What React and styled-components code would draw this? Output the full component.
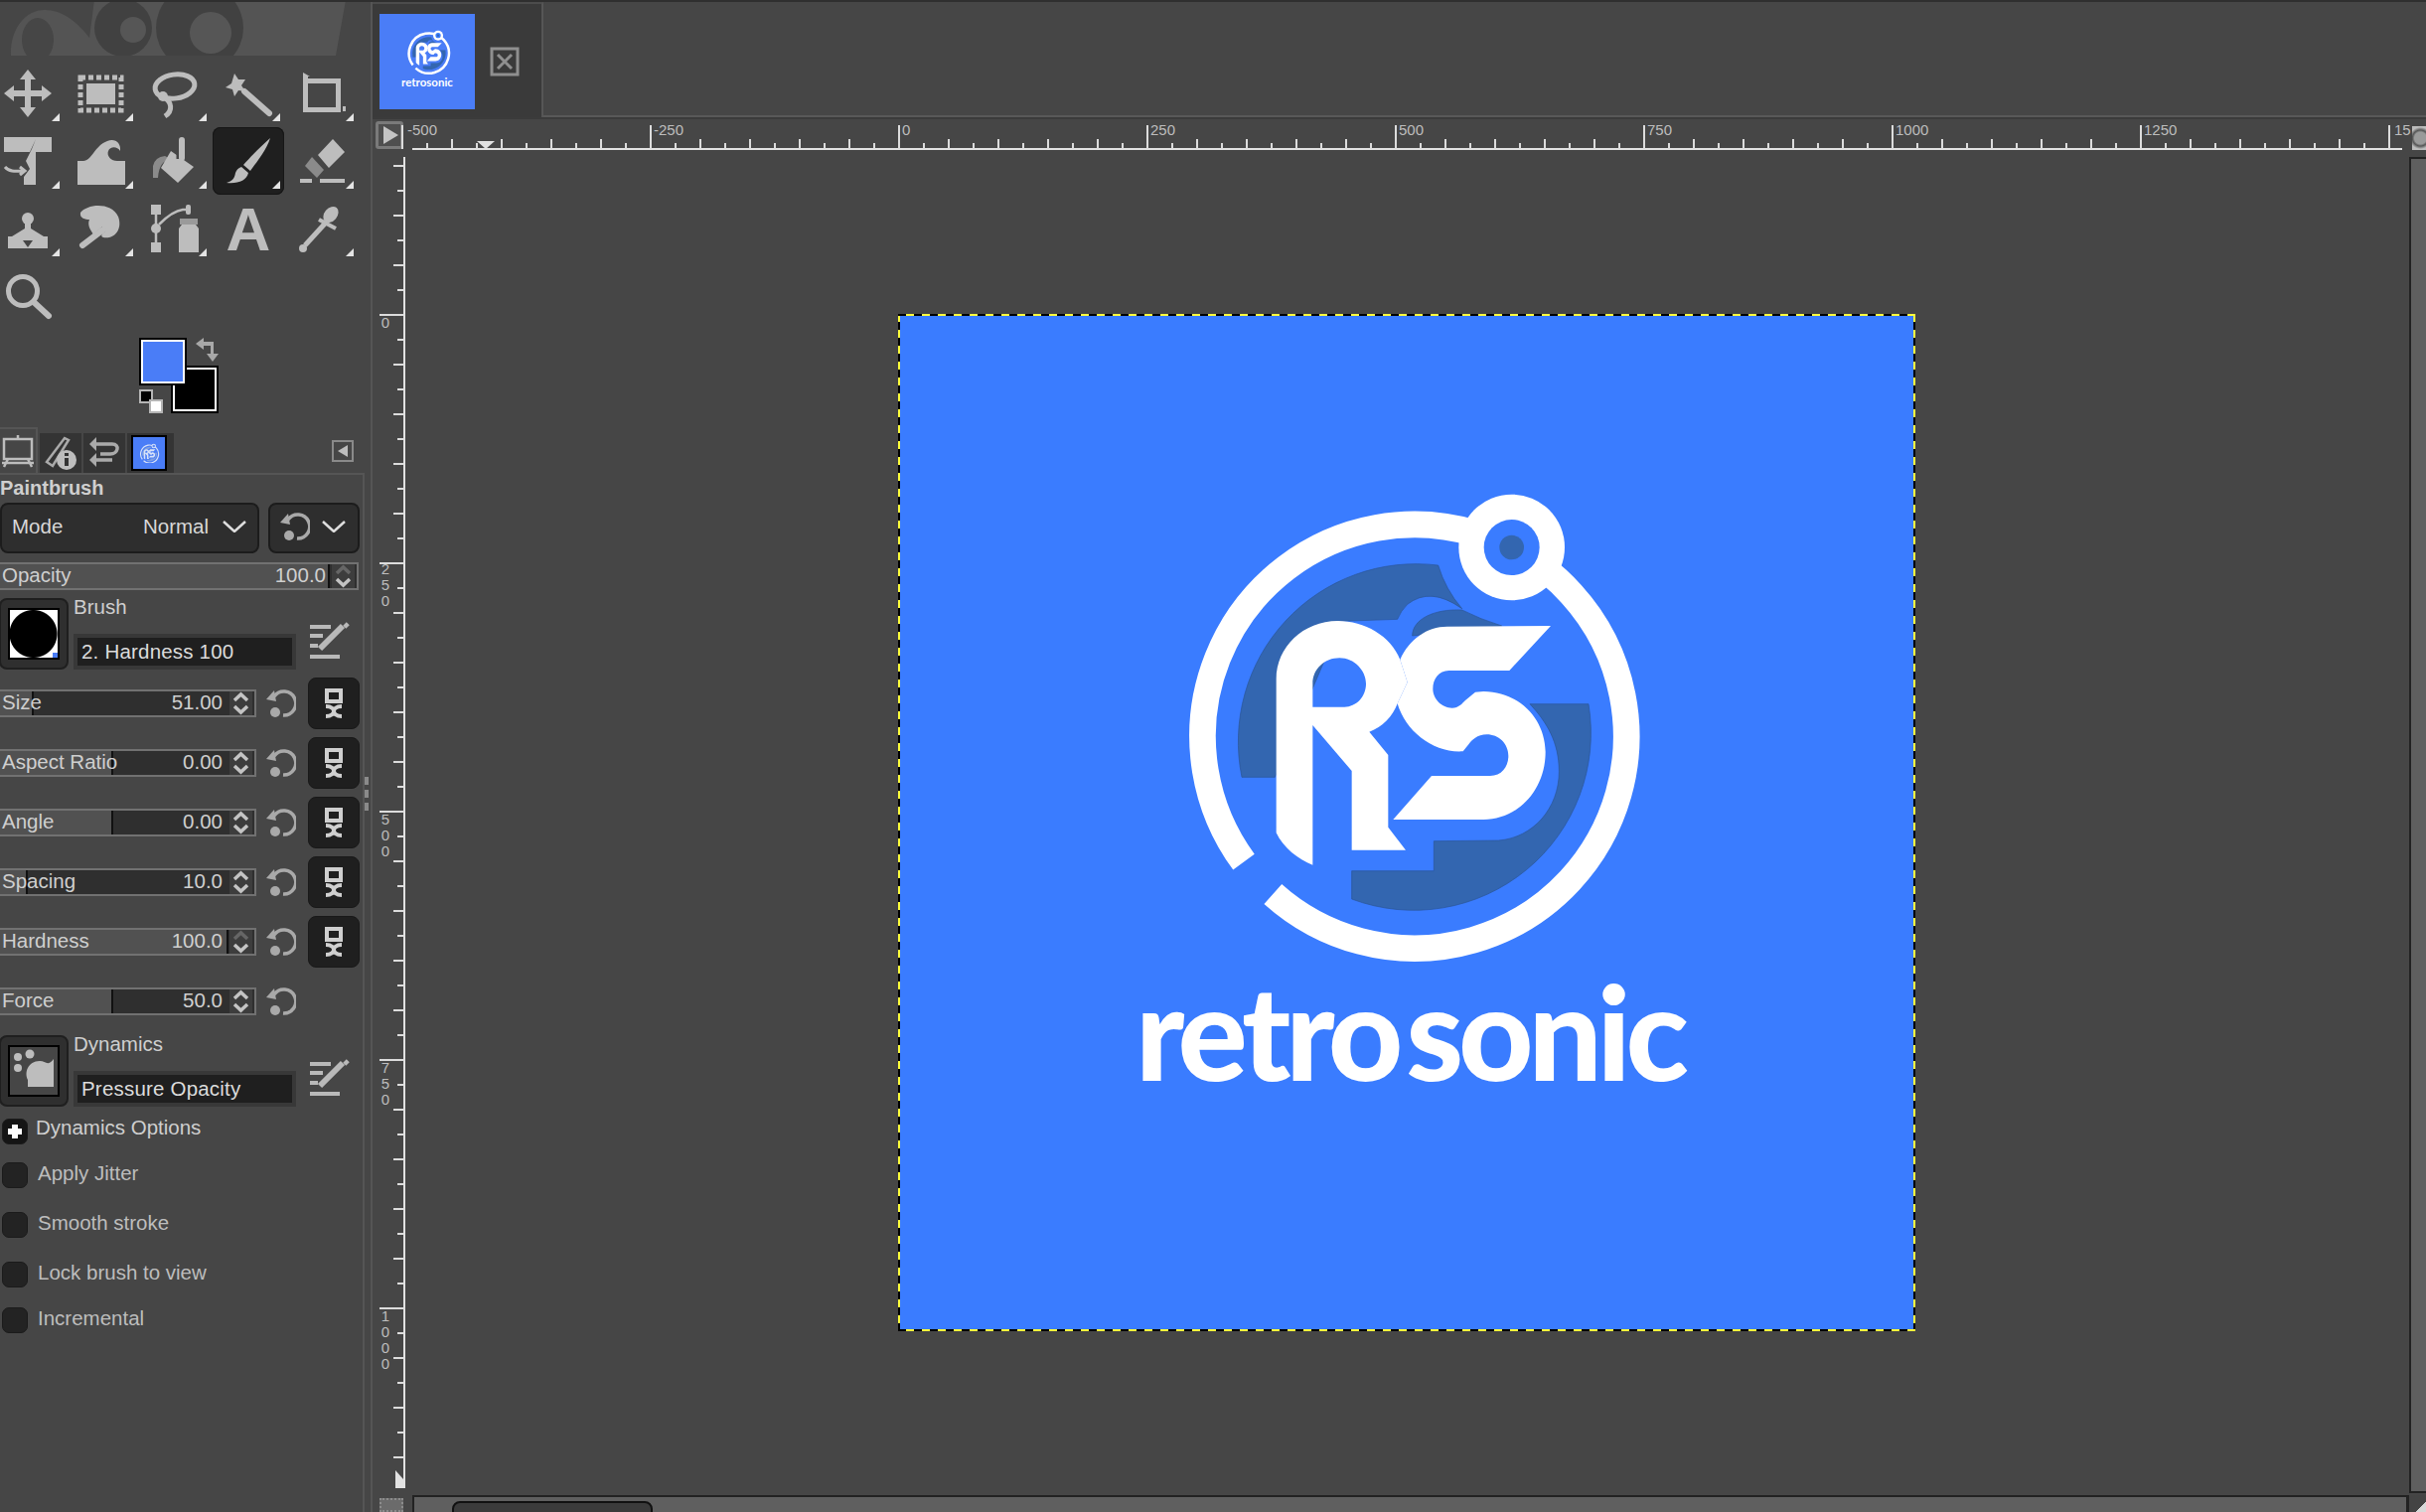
import React from "react";
import styled, { createGlobalStyle } from "styled-components";

const GlobalStyle = createGlobalStyle`
  html, body { margin: 0; padding: 0; background: #464646; }
  * { box-sizing: border-box; }
`;

const Frame = styled.div`
  display: flex;
  width: 2442px;
  height: 1522px;
  overflow: hidden;
  border-top: 2px solid #2f2f2f;
  background: #464646;
  color: #cfcfcf;
  font-family: "Liberation Sans", Arial, sans-serif;
  font-size: 20.5px;
`;

const Dock = styled.div`
  display: flex;
  flex-direction: column;
  width: 367px;
  flex: none;
  overflow: hidden;
`;

const Banner = styled.svg`
  display: block;
  width: 367px;
  height: 58px;
  flex: none;
`;

const ToolGrid = styled.div`
  display: grid;
  grid-template-columns: repeat(5, 74px);
  grid-auto-rows: 68px;
  margin-left: -8px;
  flex: none;
`;

const ToolCell = styled.div`
  position: relative;
  width: 72px;
  height: 68px;
  padding: 10px 0 0 12px;
  border-radius: 8px;
  background: ${p => (p.$active ? "#1f1f1f" : "transparent")};
  box-shadow: ${p => (p.$active ? "inset 0 0 0 1px #161616" : "none")};
  &::after {
    content: "";
    display: ${p => (p.$plain ? "none" : "block")};
    position: absolute;
    right: 4px;
    bottom: 6px;
    border-left: 8px solid transparent;
    border-bottom: 8px solid #e4e4e4;
  }
`;

const ToolIcon = styled.svg`
  display: block;
  width: 48px;
  height: 48px;
  overflow: visible;
  fill: #bdbdbd;
  stroke: none;
`;

const ColorArea = styled.div`
  position: relative;
  height: 98px;
  flex: none;
`;

const Swatch = styled.div`
  position: absolute;
  left: ${p => p.$x}px;
  top: ${p => p.$y}px;
  width: 48px;
  height: 48px;
  background: ${p => p.$color};
  box-shadow: inset 0 0 0 2px #000, inset 0 0 0 4px #fff;
`;

const DefaultSwatch = styled.div`
  position: absolute;
  left: ${p => p.$x}px;
  top: ${p => p.$y}px;
  width: 14px;
  height: 14px;
  background: ${p => p.$color};
  border: 2px solid #b5b5b5;
`;

const SwapIcon = styled.svg`
  position: absolute;
  left: 196px;
  top: 8px;
  width: 25px;
  height: 24px;
`;

const TabRow = styled.div`
  display: flex;
  align-items: flex-end;
  height: 46px;
  flex: none;
  padding-right: 11px;
`;

const DockTab = styled.div`
  display: flex;
  align-items: center;
  justify-content: center;
  width: ${p => p.$w}px;
  height: ${p => (p.$current ? 46 : 40)}px;
  margin-right: 2px;
  padding-right: ${p => p.$nudge || 0}px;
  background: ${p => (p.$current ? "#464646" : "#343434")};
  border-right: ${p => (p.$current ? "2px solid #555" : "none")};
  border-top: ${p => (p.$current ? "2px solid #555" : "none")};
`;

const TabGlyph = styled.svg`
  display: block;
  width: 32px;
  height: 34px;
  flex: none;
`;

const BlueTab = styled.div`
  display: flex;
  align-items: center;
  justify-content: center;
  width: 36px;
  height: 36px;
  flex: none;
  border: 2px solid #000;
  background: #4a7df7;
`;

const ConfigButton = styled.svg`
  width: 22px;
  height: 22px;
  margin: 0 0 11px auto;
`;

const Panel = styled.div`
  flex: 1;
  border-top: 2px solid #555;
  border-right: 2px solid #555;
  padding-right: 3px;
`;

const PanelTitle = styled.div`
  height: 28px;
  line-height: 26px;
  font-size: 20px;
  font-weight: 700;
`;

const ModeRow = styled.div`
  display: flex;
  gap: 9px;
  height: 51px;
`;

const DropButton = styled.div`
  display: flex;
  align-items: center;
  width: ${p => p.$w}px;
  height: 51px;
  padding: 0 11px 3px 10px;
  background: #2e2e2e;
  border: 2px solid #1c1c1c;
  border-radius: 8px;
  color: #d8d8d8;
`;

const Grow = styled.span`
  flex: 1;
`;

const Chevron = styled.svg`
  width: 24px;
  height: 12px;
  margin-left: ${p => p.$gap || 0}px;
  fill: none;
  stroke: #dedede;
  stroke-width: 2.5;
`;

const ScaleBox = styled.div`
  display: flex;
  align-items: center;
  width: ${p => p.$w}px;
  height: 28px;
  padding: 0 0 2px 2px;
  border: 2px solid #717171;
  border-left: none;
  background: linear-gradient(
    90deg,
    #515151 ${p => p.$fill - 2}px,
    #111 ${p => p.$fill - 2}px,
    #111 ${p => p.$fill}px,
    #2f2f2f ${p => p.$fill}px
  );
  line-height: 24px;
`;

const ScaleValue = styled.span`
  margin-left: auto;
  margin-right: ${p => p.$gap}px;
`;

const Spin = styled.svg`
  width: 23px;
  height: 24px;
  margin: 0 2px -2px 0;
  flex: none;
  background: #3d3d3d;
  fill: none;
  stroke-width: 3.5;
`;

const OpacityWrap = styled.div`
  margin-top: 9px;
`;

const ResourceRow = styled.div`
  display: flex;
  height: 72px;
  margin-top: ${p => p.$top}px;
`;

const Preview = styled.div`
  display: flex;
  align-items: center;
  justify-content: center;
  width: 70px;
  height: 72px;
  margin-left: -1px;
  flex: none;
  background: #2f2f2f;
  border: 2px solid #1f1f1f;
  border-radius: 8px;
`;

const PreviewInner = styled.div`
  position: relative;
  width: 52px;
  height: 52px;
  border: 2px solid #000;
  background: ${p => (p.$brush ? "radial-gradient(circle at 49% 50%, #000 0 23.5px, #fff 24.5px)" : "#464646")};
`;

const CornerMark = styled.div`
  position: absolute;
  right: 0;
  bottom: 0;
  width: 5px;
  height: 5px;
  background: #4a7df7;
`;

const ResourceBody = styled.div`
  width: 224px;
  margin-left: 5px;
  flex: none;
`;

const ResourceLabel = styled.div`
  height: 36px;
  line-height: 18px;
`;

const ResourceName = styled.div`
  height: 36px;
  padding: 4px;
  background: #383838;
  & > div {
    height: 28px;
    padding-left: 4px;
    line-height: 27px;
    background: #1f1f1f;
    color: #dcdcdc;
    letter-spacing: 0.2px;
  }
`;

const EditIcon = styled.svg`
  width: 40px;
  height: 38px;
  margin: 24px 0 0 14px;
  fill: #b9b9b9;
`;

const SliderRow = styled.div`
  display: flex;
  align-items: center;
  height: 60px;
  margin-top: ${p => p.$top || 0}px;
`;

const ResetIcon = styled.svg`
  width: 30px;
  height: 30px;
  margin-left: ${p => p.$gap}px;
  margin-right: ${p => p.$after || 0}px;
  flex: none;
  fill: #a9a9a9;
`;

const LinkButton = styled.div`
  display: flex;
  align-items: center;
  justify-content: center;
  width: 52px;
  height: 52px;
  margin-left: 12px;
  background: #1f1f1f;
  border: 1px solid #191919;
  border-radius: 8px;
`;

const LinkIcon = styled.svg`
  width: 18px;
  height: 30px;
  fill: none;
  stroke: #cfcfcf;
  stroke-width: 4;
`;

const OptionRow = styled.div`
  display: flex;
  align-items: center;
  height: 26px;
  margin-top: ${p => p.$top}px;
  padding-left: 2px;
  color: #bdbdbd;
`;

const CheckBox = styled.div`
  display: flex;
  align-items: center;
  justify-content: center;
  width: 26px;
  height: 26px;
  flex: none;
  margin-right: ${p => p.$gap}px;
  border-radius: 7px;
  background: ${p => (p.$dark ? "#151515" : "#232323")};
  border: 1px solid #1b1b1b;
`;

const Plus = styled.svg`
  width: 14px;
  height: 14px;
  fill: #fff;
`;

const OptionTitle = styled.span`
  color: #cfcfcf;
  margin-top: -8px;
`;

const OptionText = styled.span`
  margin-top: -5px;
`;

const Sash = styled.div`
  display: flex;
  flex-direction: column;
  justify-content: flex-start;
  width: 8px;
  flex: none;
  padding-top: 778px;
  border-right: 2px solid #555;
  & > i {
    display: block;
    width: 4px;
    height: 8px;
    margin: 2px 0 3px 0;
    background: #8a8a8a;
  }
`;

const Main = styled.div`
  display: flex;
  flex-direction: column;
  flex: 1;
  min-width: 0;
`;

const ImageTabs = styled.div`
  display: flex;
  height: 116px;
  flex: none;
  border-bottom: 2px solid #595959;
  box-shadow: 0 2px 0 #3b3b3b;
`;

const ImageTab = styled.div`
  display: flex;
  align-items: center;
  width: 172px;
  height: 116px;
  padding: 8px 0 6px 7px;
  background: #3a3a3a;
  border-top: 2px solid #4c4c4c;
  border-right: 2px solid #565656;
`;

const Thumbnail = styled.div`
  display: flex;
  flex-direction: column;
  align-items: center;
  width: 96px;
  height: 96px;
  flex: none;
  padding-top: 15px;
  background: #4a7df7;
`;

const ThumbnailName = styled.div`
  margin-top: 1px;
  color: #fff;
  font-family: Lato, "Liberation Sans", sans-serif;
  font-size: 11.5px;
  font-weight: 700;
  line-height: 12px;
`;

const CloseIcon = styled.svg`
  width: 30px;
  height: 30px;
  margin-left: 15px;
  fill: none;
  stroke: #8f8f8f;
  stroke-width: 3;
`;

const Workspace = styled.div`
  display: grid;
  flex: 1;
  min-height: 0;
  grid-template-columns: 40px 2010px 17px;
  grid-template-rows: 40px 1347px 17px;
`;

const CornerButton = styled.div`
  display: flex;
  align-items: center;
  justify-content: center;
  width: 28px;
  height: 28px;
  margin: 4px 0 0 3px;
  border: 3px solid #7a7a7a;
  border-radius: 3px;
  background: #4f4f4f;
  &::before {
    content: "";
    border-left: 15px solid #c4c4c4;
    border-top: 9px solid transparent;
    border-bottom: 9px solid transparent;
    margin-left: 3px;
  }
`;

const RulerSvg = styled.svg`
  display: block;
  overflow: visible;
  font-family: "Liberation Sans", Arial, sans-serif;
  font-size: 15px;
`;

const ZoomKnob = styled.div`
  width: 14px;
  height: 24px;
  margin: 9px 0 0 3px;
  background: radial-gradient(circle at 60% 50%, #9a9a9a 0 6px, #555 8px, #bdbdbd 11px);
`;

const Canvas = styled.div`
  padding: 159px 0 0 490px;
  overflow: hidden;
`;

const ImageFrame = styled.div`
  position: relative;
  width: 1022px;
  height: 1022px;
  padding: 163px 0 0 245px;
  background: #3a7cff;
  &::after {
    content: "";
    position: absolute;
    inset: -1px;
    background:
      repeating-linear-gradient(90deg, #000 0 8px, #ffff3c 8px 16px) top / 100% 2px no-repeat,
      repeating-linear-gradient(90deg, #000 0 8px, #ffff3c 8px 16px) bottom / 100% 2px no-repeat,
      repeating-linear-gradient(0deg, #000 0 8px, #ffff3c 8px 16px) left / 2px 100% no-repeat,
      repeating-linear-gradient(0deg, #000 0 8px, #ffff3c 8px 16px) right / 2px 100% no-repeat;
  }
`;

const MarkSvg = styled.svg`
  display: block;
  width: ${p => p.$w}px;
  height: ${p => p.$w * 0.952}px;
  flex: none;
`;

const Wordmark = styled.div`
  width: 560px;
  margin: 0 0 0 -7px;
  color: #fff;
  font-family: Lato, "Liberation Sans", sans-serif;
  font-size: 131px;
  font-weight: 900;
  line-height: 126px;
  letter-spacing: -5.2px;
  white-space: nowrap;
  & > span {
    margin-right: 8px;
  }
`;

const CornerSquare = styled.div`
  width: 24px;
  height: 14px;
  margin: 3px 0 0 7px;
  background: #6b6b6b;
  border: 2px dotted #8c8c8c;
`;

const HScroll = styled.div`
  padding: 4px 0 0 38px;
  background: #5f5f5f;
  border-top: 2px solid #222;
  border-left: 2px solid #222;
  border-right: 3px solid #222;
`;

const HThumb = styled.div`
  width: 202px;
  height: 20px;
  background: #3b3b3b;
  border: 2px solid #111;
  border-radius: 8px 8px 0 0;
`;

const VScroll = styled.div`
  margin-bottom: 2px;
  background: #5f5f5f;
  border: 2px solid #222;
  border-right: none;
`;

const ScrollCorner = styled.div`
  background: linear-gradient(135deg, #444 0 70%, #d8d8d8 70%);
`;

const Mark = ({ w, dark = "#3366b0", ink = "#fff", hole = "#3a7cff" }) => (
  <MarkSvg $w={w} viewBox="0 0 1560 1485">
    <path fill={dark} stroke="#2b5596" strokeWidth="2" d="M300 907A537 537 0 0 1 893 267Q915 340 965 398Q870 330 800 385Q780 405 770 430L600 436L400 907Z" />
    <path fill={dark} stroke="#2b5596" strokeWidth="2" d="M815 480C815 430 880 398 965 402Q1020 430 1085 450L900 470Z" />
    <path fill={dark} stroke="#2b5596" strokeWidth="2" d="M1170 686L1347 686A535 535 0 0 1 632 1275L632 1190L880 1190L880 1100L1075 1098C1180 1090 1258 1000 1258 890C1258 800 1220 740 1170 686Z" />
    <path fill="none" stroke={ink} strokeWidth="80" d="M306 1163A640 640 0 1 1 394 1260" />
    <circle cx="1115" cy="213" r="160" fill={ink} />
    <circle cx="1115" cy="213" r="84" fill={hole} />
    <circle cx="1115" cy="213" r="37" fill={dark} />
    <path fill={ink} fillRule="evenodd" d="M514 1172L514 750L632 888L632 1127L795 1127L742 1058L742 840L685 770C725 755 755 725 770 685L800 620L778 552C750 480 670 435 590 435C485 435 404 515 404 610L404 1075C425 1120 470 1155 514 1172ZM514 695L514 625C514 580 550 547 595 547C640 547 675 585 675 625C675 665 645 695 610 695Z" />
    <path fill={ink} d="M778 552C805 490 860 452 920 452L1233 450L1108 585L925 585C895 585 877 610 877 640C877 672 905 698 935 698C955 698 965 685 975 675L1005 650L1030 648C1140 650 1215 730 1217 830C1217 950 1130 1035 1030 1035L757 1035L873 903L1050 903C1085 903 1105 875 1105 843C1105 805 1075 778 1040 778C1010 778 995 795 985 808L968 829C880 835 795 770 770 685L800 620Z" />
  </MarkSvg>
);

const toolIcons = [
  <path d="M24 0L32 10H27V21H38V16L48 24L38 32V27H27V38H32L24 48L16 38H21V27H10V32L0 24L10 16V21H21V10H16Z" />,
  <>
    <rect x="9" y="14" width="29" height="21" />
    <rect x="3" y="8" width="41" height="33" fill="none" stroke="#bdbdbd" strokeWidth="5" strokeDasharray="5 3" />
  </>,
  <>
    <ellipse cx="24" cy="17" rx="20" ry="12" transform="rotate(-8 24 17)" fill="none" stroke="#bdbdbd" strokeWidth="5" />
    <circle cx="12" cy="27" r="5" />
    <path d="M11 27C22 32 22 42 14 47" fill="none" stroke="#bdbdbd" strokeWidth="5" />
  </>,
  <>
    <path d="M10 4L14 10L21 10L17 16L21 22L14 21L10 27L8 20L1 18L7 14Z" />
    <path d="M20 22L45 44" fill="none" stroke="#bdbdbd" strokeWidth="6" strokeLinecap="round" />
  </>,
  <>
    <path d="M5 3L12 7H10V9H43V43H5ZM10 14V38H38V14Z" fillRule="evenodd" />
    <rect x="45" y="37" width="3" height="5" />
  </>,
  <>
    <path d="M0 0H48V15H32V48H20V40L26 32L22 24L28 12L32 2L26 15H0Z" />
    <path d="M1 30C6 36 14 34 20 34M16 30L21 34L16 38" fill="none" stroke="#bdbdbd" strokeWidth="3" />
  </>,
  <path d="M0 48V24H6C14 24 18 8 30 4C38 1 44 6 43 14C40 9 33 9 31 14C29 19 34 24 40 24H48V48Z" />,
  <>
    <path d="M2 41V29Q4 20 14 19L20 22Q8 24 7 41Z" fill="#8b8b8b" />
    <path d="M20 14L43 30L27 46L10 31Z" />
    <path d="M31 2V22" fill="none" stroke="#464646" strokeWidth="11" />
    <path d="M31 3V21" fill="none" stroke="#bdbdbd" strokeWidth="6" strokeLinecap="round" />
  </>,
  <>
    <path d="M46 1C42 14 30 28 26 34L19 28C26 20 38 8 46 1Z" />
    <path d="M17 30L24 36C22 44 14 47 2 46C8 44 10 42 11 36C12 33 14 31 17 30Z" />
  </>,
  <>
    <path d="M35 2L47 15L31 31L20 18Z" />
    <path d="M14 20L26 33L19 41L7 29Z" fill="#8b8b8b" />
    <rect x="2" y="42" width="12" height="4" />
    <rect x="22" y="42" width="25" height="4" />
  </>,
  <>
    <circle cx="24" cy="14" r="6" />
    <path d="M21 18H27V24L40 32H44V44H4V32H8L21 24Z" />
    <path d="M19 36H29L24 43Z" fill="#464646" />
  </>,
  <>
    <path d="M3 8C10 -1 34 -3 41 12C46 26 36 35 26 33C23 32 24 29 28 27L25 22L16 30C12 24 10 20 12 15C8 15 2 14 3 8Z" />
    <path d="M26 25L5 41" fill="none" stroke="#bdbdbd" strokeWidth="6" strokeLinecap="round" />
  </>,
  <>
    <rect x="0" y="0" width="10" height="10" />
    <rect x="0" y="38" width="10" height="10" />
    <circle cx="5" cy="24" r="5" />
    <path d="M5 8V40M8 20C14 14 24 6 32 5H38" fill="none" stroke="#bdbdbd" strokeWidth="2.5" />
    <rect x="35" y="0" width="5" height="10" rx="2" />
    <rect x="29" y="14" width="18" height="6" fill="#9a9a9a" />
    <path d="M31 20H45L48 24V48H28V24Z" />
  </>,
  <text x="24" y="46" textAnchor="middle" fontFamily="Liberation Sans" fontWeight="700" fontSize="62">A</text>,
  <>
    <ellipse cx="33" cy="10" rx="6.5" ry="9" transform="rotate(40 33 10)" />
    <path d="M21 15L38 24" fill="none" stroke="#bdbdbd" strokeWidth="4" />
    <path d="M28 18L7 41" fill="none" stroke="#bdbdbd" strokeWidth="5" />
    <circle cx="5" cy="44" r="4" />
  </>,
  <>
    <circle cx="19" cy="19" r="14.5" fill="none" stroke="#bdbdbd" strokeWidth="5" />
    <path d="M31 31L45 44" fill="none" stroke="#bdbdbd" strokeWidth="6" strokeLinecap="round" />
  </>,
];

const plainTools = [13, 15];

const sliders = [
  { label: "Size", value: "51.00", fill: 34 },
  { label: "Aspect Ratio", value: "0.00", fill: 114 },
  { label: "Angle", value: "0.00", fill: 114 },
  { label: "Spacing", value: "10.0", fill: 28 },
  { label: "Hardness", value: "100.0", fill: 230, maxed: true },
  { label: "Force", value: "50.0", fill: 114, noLink: true },
];

const SpinArrows = ({ dim }) => (
  <Spin viewBox="0 0 23 24">
    <path d="M5 9L11.5 3L18 9" stroke={dim ? "#666" : "#c4c4c4"} />
    <path d="M5 15L11.5 21L18 15" stroke="#c4c4c4" />
  </Spin>
);

const Reset = ({ gap, after }) => (
  <ResetIcon $gap={gap} $after={after} viewBox="0 0 30 30">
    <path d="M8 8A12 12 0 1 1 17 27" fill="none" stroke="#a9a9a9" strokeWidth="3.5" />
    <path d="M0 11L8 2L10 13Z" />
    <circle cx="9" cy="24" r="5" />
  </ResetIcon>
);

const Edit = () => (
  <EditIcon viewBox="0 0 40 38">
    <rect x="0" y="3" width="21" height="4" />
    <rect x="0" y="12" width="13" height="4" />
    <rect x="0" y="22" width="8" height="4" />
    <rect x="0" y="33" width="30" height="4" />
    <path d="M10 27L33 4" stroke="#b9b9b9" strokeWidth="6" />
    <path d="M35 2L38 5" stroke="#b9b9b9" strokeWidth="5" />
  </EditIcon>
);

const hTicks = Array.from({ length: 81 }, (_, i) => 405 + i * 25);
const hLabels = [
  [410, "-500"], [658, "-250"], [908, "0"], [1158, "250"], [1408, "500"],
  [1658, "750"], [1908, "1000"], [2158, "1250"], [2410, "15"],
];
const vTicks = Array.from({ length: 53 }, (_, i) => 167 + i * 25);
const vLabels = [[325, "0"], [573, "250"], [825, "500"], [1075, "750"], [1325, "1000"]];

const HRuler = () => (
  <RulerSvg width="2010" height="40" viewBox="415 118 2010 40">
    <rect x="415" y="149" width="2003" height="2" fill="#e2e2e2" />
    {hTicks.map(x => {
      const n = x - 405;
      const top = n % 250 === 0 ? 126 : n % 50 === 0 ? 140 : 144;
      return <rect key={x} x={x - 1} y={top} width="2" height={150 - top} fill="#dcdcdc" />;
    })}
    {hLabels.map(([x, t]) => (
      <text key={t} x={x} y="136" fill="#bdbdbd">{t}</text>
    ))}
    <path d="M480 142H498L489 150Z" fill="#e2e2e2" />
  </RulerSvg>
);

const VRuler = () => (
  <RulerSvg width="40" height="1347" viewBox="375 158 40 1347">
    <rect x="406" y="158" width="2" height="1340" fill="#e2e2e2" />
    {vTicks.map(y => {
      const n = y - 67;
      const left = n % 250 === 0 ? 382 : n % 50 === 0 ? 396 : 400;
      return <rect key={y} x={left} y={y - 1} width={407 - left} height="2" fill="#dcdcdc" />;
    })}
    {vLabels.map(([y, t]) =>
      t.split("").map((d, i) => (
        <text key={t + i} x="388" y={y + 5 + i * 16} textAnchor="middle" fill="#bdbdbd">{d}</text>
      ))
    )}
    <path d="M398 1480L406 1489V1498L398 1498Z" fill="#e2e2e2" />
  </RulerSvg>
);

export default function App() {
  return (
    <>
      <GlobalStyle />
      <Frame>
        <Dock>
          <Banner viewBox="0 2 367 58">
            <path d="M11 56C10 30 25 10 45 10C65 10 80 25 90 38L95 0H348L338 56Z" fill="#545454" />
            <ellipse cx="38" cy="40" rx="16" ry="22" fill="#464646" />
            <circle cx="124" cy="28" r="29" fill="#414141" />
            <circle cx="134" cy="30" r="13" fill="#565656" />
            <circle cx="201" cy="28" r="44" fill="#414141" />
            <circle cx="212" cy="33" r="21" fill="#565656" />
            <rect x="0" y="56" width="367" height="6" fill="#464646" />
          </Banner>
          <ToolGrid>
            {toolIcons.map((icon, i) => (
              <ToolCell key={i} $active={i === 8} $plain={plainTools.includes(i)}>
                <ToolIcon viewBox="0 0 48 48">{icon}</ToolIcon>
              </ToolCell>
            ))}
          </ToolGrid>
          <ColorArea>
            <Swatch $x={172} $y={36} $color="#000" />
            <Swatch $x={140} $y={8} $color="#4a7df7" />
            <SwapIcon viewBox="0 0 25 24">
              <path d="M1 6L9 0V4H19V16H24L18 24L12 16H16V8H9V12Z" fill="#a8a8a8" />
            </SwapIcon>
            <DefaultSwatch $x={140} $y={60} $color="#000" />
            <DefaultSwatch $x={150} $y={70} $color="#fff" />
          </ColorArea>
          <TabRow>
            <DockTab $current $w={38}>
              <TabGlyph viewBox="0 0 32 34" fill="none" stroke="#bdbdbd" strokeWidth="2.5">
                <rect x="2" y="5" width="28" height="20" />
                <path d="M16 1V5M6 25L2 33M26 25L30 33M0 29H32" />
              </TabGlyph>
            </DockTab>
            <DockTab $w={42}>
              <TabGlyph viewBox="0 0 32 34">
                <path d="M2 26L20 2L24 4L8 30Z" fill="none" stroke="#aaa" strokeWidth="2.5" />
                <circle cx="22" cy="24" r="10" fill="#bdbdbd" />
                <rect x="20" y="22" width="4" height="8" fill="#333" />
                <rect x="20" y="17" width="4" height="3" fill="#333" />
              </TabGlyph>
            </DockTab>
            <DockTab $w={42}>
              <TabGlyph viewBox="0 0 32 34" fill="none" stroke="#aaa" strokeWidth="3.5">
                <path d="M8 8H24C32 8 30 18 22 18H12M6 24H24" />
                <path d="M1 24L8 17V31Z" fill="#aaa" stroke="none" />
                <path d="M8 1V15L1 8Z" fill="#aaa" stroke="none" />
              </TabGlyph>
            </DockTab>
            <DockTab $w={47} $nudge={3}>
              <BlueTab>
                <Mark w={22} dark="#7f9fe0" ink="#d8e2f8" hole="#4a7df7" />
              </BlueTab>
            </DockTab>
            <ConfigButton viewBox="0 0 22 22">
              <rect x="1" y="1" width="20" height="20" fill="none" stroke="#8a8a8a" strokeWidth="2" />
              <path d="M16 5V17L6 11Z" fill="#bdbdbd" />
            </ConfigButton>
          </TabRow>
          <Panel>
            <PanelTitle>Paintbrush</PanelTitle>
            <ModeRow>
              <DropButton $w={261}>
                Mode
                <Grow />
                Normal
                <Chevron $gap={14} viewBox="0 0 24 12"><path d="M1 1L12 11L23 1" /></Chevron>
              </DropButton>
              <DropButton $w={92}>
                <Reset gap={0} after={12} />
                <Chevron viewBox="0 0 24 12"><path d="M1 1L12 11L23 1" /></Chevron>
              </DropButton>
            </ModeRow>
            <OpacityWrap>
              <ScaleBox $w={361} $fill={332}>
                Opacity
                <ScaleValue $gap={6}>100.0</ScaleValue>
                <SpinArrows dim />
              </ScaleBox>
            </OpacityWrap>
            <ResourceRow $top={8}>
              <Preview>
                <PreviewInner $brush><CornerMark /></PreviewInner>
              </Preview>
              <ResourceBody>
                <ResourceLabel>Brush</ResourceLabel>
                <ResourceName><div>2. Hardness 100</div></ResourceName>
              </ResourceBody>
              <Edit />
            </ResourceRow>
            {sliders.map((s, i) => (
              <SliderRow key={s.label} $top={i === 0 ? 4 : 0}>
                <ScaleBox $w={258} $fill={s.fill}>
                  {s.label}
                  <ScaleValue $gap={7}>{s.value}</ScaleValue>
                  <SpinArrows dim={s.maxed} />
                </ScaleBox>
                <Reset gap={10} />
                {!s.noLink && (
                  <LinkButton>
                    <LinkIcon viewBox="0 0 18 30">
                      <rect x="2" y="2" width="14" height="11" />
                      <path d="M1 18C7 18 9 21 9 23C9 25 7 28 1 28M17 18C11 18 9 21 9 23C9 25 11 28 17 28" />
                    </LinkIcon>
                  </LinkButton>
                )}
              </SliderRow>
            ))}
            <ResourceRow $top={4}>
              <Preview>
                <PreviewInner>
                  <ToolIcon viewBox="0 0 48 48">
                    <circle cx="8" cy="10" r="4" />
                    <circle cx="20" cy="7" r="4.5" />
                    <circle cx="8" cy="21" r="4" />
                    <path d="M18 40V33C14 26 18 14 30 14C36 14 38 20 44 12V40Z" />
                  </ToolIcon>
                </PreviewInner>
              </Preview>
              <ResourceBody>
                <ResourceLabel>Dynamics</ResourceLabel>
                <ResourceName><div>Pressure Opacity</div></ResourceName>
              </ResourceBody>
              <Edit />
            </ResourceRow>
            <OptionRow $top={12}>
              <CheckBox $dark $gap={8}>
                <Plus viewBox="0 0 14 14"><path d="M4 0H10V4H14V10H10V14H4V10H0V4H4Z" /></Plus>
              </CheckBox>
              <OptionTitle>Dynamics Options</OptionTitle>
            </OptionRow>
            <OptionRow $top={18}><CheckBox $gap={10} /><OptionText>Apply Jitter</OptionText></OptionRow>
            <OptionRow $top={24}><CheckBox $gap={10} /><OptionText>Smooth stroke</OptionText></OptionRow>
            <OptionRow $top={24}><CheckBox $gap={10} /><OptionText>Lock brush to view</OptionText></OptionRow>
            <OptionRow $top={20}><CheckBox $gap={10} /><OptionText>Incremental</OptionText></OptionRow>
          </Panel>
        </Dock>
        <Sash><i /><i /><i /></Sash>
        <Main>
          <ImageTabs>
            <ImageTab>
              <Thumbnail>
                <Mark w={49} />
                <ThumbnailName>retrosonic</ThumbnailName>
              </Thumbnail>
              <CloseIcon viewBox="0 0 30 30">
                <rect x="2" y="2" width="26" height="26" />
                <path d="M8 8L22 22M22 8L8 22" />
              </CloseIcon>
            </ImageTab>
          </ImageTabs>
          <Workspace>
            <CornerButton />
            <HRuler />
            <ZoomKnob />
            <VRuler />
            <Canvas>
              <ImageFrame>
                <Mark w={520} />
                <Wordmark><span>retro</span>sonic</Wordmark>
              </ImageFrame>
            </Canvas>
            <VScroll />
            <CornerSquare />
            <HScroll><HThumb /></HScroll>
            <ScrollCorner />
          </Workspace>
        </Main>
      </Frame>
    </>
  );
}
